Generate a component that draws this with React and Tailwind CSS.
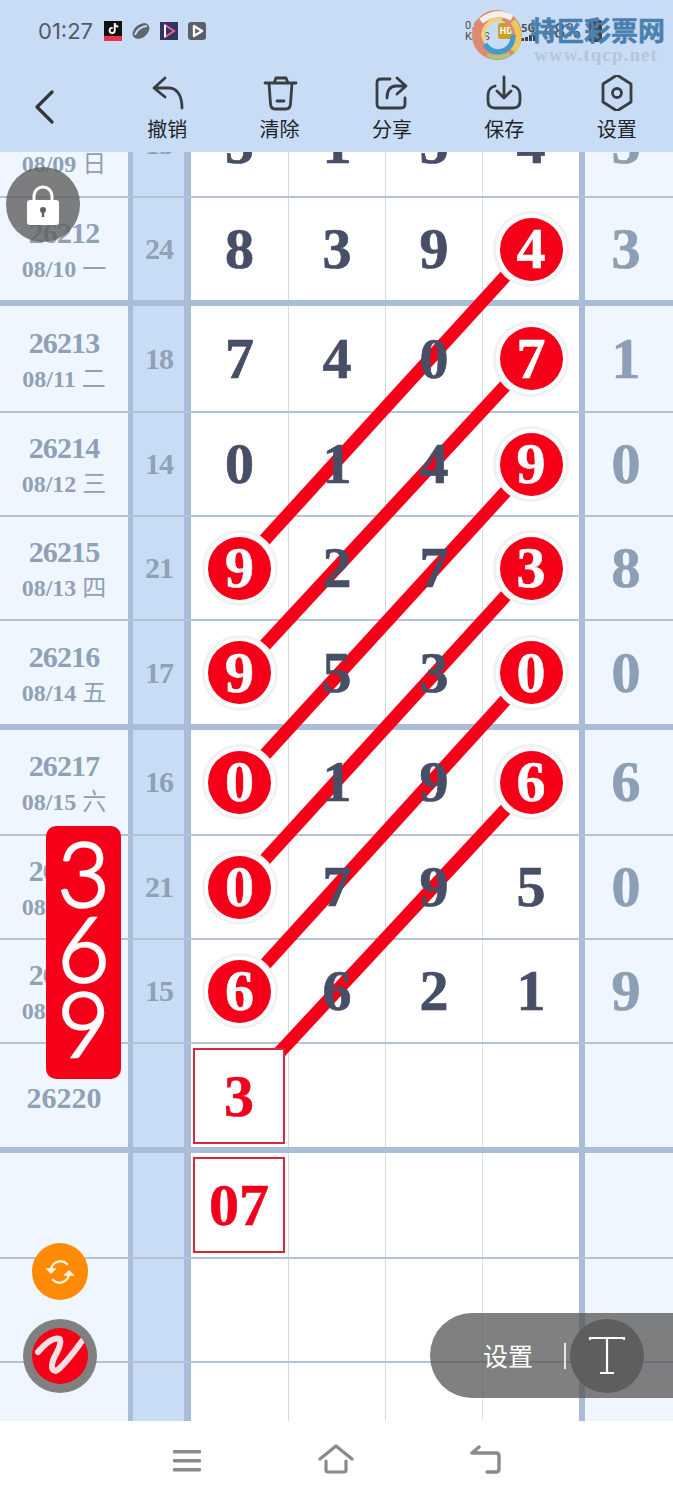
import React from 'react'
import { FaTiktok } from 'react-icons/fa6'

const rows = [
  { id: '26211', date: '08/09 日', sum: '15', digits: ['5', '1', '5', '4'], right: '5', h: 'h-[46px]', top: true },
  { id: '26212', date: '08/10 一', sum: '24', digits: ['8', '3', '9', '4'], hits: [3], right: '3', h: 'h-[108px]', thick: true },
  { id: '26213', date: '08/11 二', sum: '18', digits: ['7', '4', '0', '7'], hits: [3], right: '1', h: 'h-[107px]' },
  { id: '26214', date: '08/12 三', sum: '14', digits: ['0', '1', '4', '9'], hits: [3], right: '0', h: 'h-[104px]' },
  { id: '26215', date: '08/13 四', sum: '21', digits: ['9', '2', '7', '3'], hits: [0, 3], right: '8', h: 'h-[104px]' },
  { id: '26216', date: '08/14 五', sum: '17', digits: ['9', '5', '3', '0'], hits: [0, 3], right: '0', h: 'h-[109px]', thick: true },
  { id: '26217', date: '08/15 六', sum: '16', digits: ['0', '1', '9', '6'], hits: [0, 3], right: '6', h: 'h-[106px]' },
  { id: '26218', date: '08/16 日', sum: '21', digits: ['0', '7', '9', '5'], hits: [0], right: '0', h: 'h-[104px]' },
  { id: '26219', date: '08/17 一', sum: '15', digits: ['6', '6', '2', '1'], hits: [0], right: '9', h: 'h-[104px]' },
  { id: '26220', sum: '', digits: ['', '', '', ''], box: '3', right: '', h: 'h-[109px]', thick: true },
  { id: '', sum: '', digits: ['', '', '', ''], box: '07', right: '', h: 'h-[106px]' },
  { id: '', sum: '', digits: ['', '', '', ''], right: '', h: 'h-[104px]' },
  { id: '', sum: '', digits: ['', '', '', ''], right: '', h: 'h-[58px]', last: true },
]

const cellWidths = ['w-[98px]', 'w-[97px]', 'w-[97px]', 'w-[96px]']
const cellBorders = ['border-r border-[#d3dae3]', 'border-r border-[#d3dae3]', 'border-r border-[#dbe3ea]', '']

// ball pairs, in page coordinates
const lines = [
  [531, 248, 240, 567],
  [531, 358, 240, 672],
  [531, 464, 240, 782],
  [531, 568, 240, 887],
  [531, 672, 240, 992],
  [531, 782, 239, 1096],
]

const Ball = ({ value }) => (
  <div className="relative z-20 w-[76px] h-[76px] shrink-0 rounded-full bg-white border-[3px] border-[#f1f1f1] flex items-center justify-center">
    <div className="w-[63px] h-[63px] rounded-full bg-[#f60019] flex items-center justify-center text-white text-[58px] leading-none font-bold [-webkit-text-stroke:0.6px_#fff]">
      {value}
    </div>
  </div>
)

const Row = ({ row }) => {
  // the first row is scrolled under the header, so its content hangs from the bottom
  const align = row.top ? 'items-end overflow-hidden' : 'items-center'
  const inner = row.top ? 'h-[105px] shrink-0' : 'h-full'
  const border = row.last ? '' : row.thick ? 'border-b-[6px] border-[#a9bdd8]' : 'border-b-2 border-[#b3c2d6]'

  return (
    <div className={`flex w-full ${row.h} ${border}`}>
      <div className={`w-[128px] h-full bg-[#eff6ff] flex justify-center ${align}`}>
        <div className={`${inner} flex flex-col justify-center items-center pt-[5px] text-[#8fa1b6] font-bold`}>
          {row.id && <div className={`text-[30px] leading-[36px] ${row.date ? 'tracking-[-0.9px]' : ''}`}>{row.id}</div>}
          {row.date && (
            <div className="text-[24px] leading-[37px] whitespace-nowrap">
              {row.date.split(' ')[0]} <span className="font-normal">{row.date.split(' ')[1]}</span>
            </div>
          )}
        </div>
      </div>
      <div className={`w-[63px] h-full bg-[#c8dcf5] border-l-[5px] border-r-[7px] border-[#a9bdd8] flex justify-center pl-[1px] ${align}`}>
        <div className={`${inner} flex items-center text-[#8fa1b6] text-[30px] leading-none font-bold tracking-[-1px]`}>{row.sum}</div>
      </div>
      {row.digits.map((d, i) => (
        <div key={i} className={`${cellWidths[i]} ${cellBorders[i]} h-full bg-white flex justify-center ${align}`}>
          {i === 0 && row.box ? (
            <div className="relative z-20 ml-[-1px] w-[92px] h-[96px] shrink-0 bg-white border-2 border-[#d8283c] flex items-center justify-center text-[#f0001c] text-[60px] leading-none font-bold [-webkit-text-stroke:0.6px_#f0001c]">
              {row.box}
            </div>
          ) : row.hits && row.hits.includes(i) ? (
            <Ball value={d} />
          ) : (
            <div className={`${inner} relative z-20 flex items-center text-[#474f66] text-[58px] leading-none font-bold [-webkit-text-stroke:0.7px_#474f66]`}>{d}</div>
          )}
        </div>
      ))}
      <div className={`w-[94px] h-full bg-[#eff6ff] border-l-[6px] border-[#a9bdd8] flex justify-center pr-[6px] ${align}`}>
        <div className={`${inner} flex items-center text-[#8d9fb4] text-[58px] leading-none font-bold [-webkit-text-stroke:0.7px_#8d9fb4]`}>{row.right}</div>
      </div>
    </div>
  )
}

const ToolIcon = ({ children }) => (
  <svg width="40" height="36" viewBox="0 0 40 36" fill="none" stroke="#3a3d42" strokeWidth="2.8" strokeLinecap="round" strokeLinejoin="round">
    {children}
  </svg>
)

const tools = [
  { label: '撤销', icon: <path d="M18 3 L7 13 L18 22 M7 13 H22 C31 13 35 22 35 33" /> },
  { label: '清除', icon: <><path d="M5 8 H36 M14 8 L16 3 H26 L28 8 M9 8 L10.5 29 Q11 34 15 34 H26 Q30 34 30.5 29 L32 8" /><path d="M17 26 H24" /></> },
  { label: '分享', icon: <><path d="M18 4 H9 Q5 4 5 8 V29 Q5 33 9 33 H29 Q33 33 33 29 V23" /><path d="M25 3 L34 11 L25 19 M33 11 H24 Q15 11 15 23" /></> },
  { label: '保存', icon: <><path d="M11 11 Q4 13 4 20 V26 Q4 33 11 33 H29 Q36 33 36 26 V20 Q36 13 29 11" /><path d="M20 2 V22 M13 16 L20 23 L27 16" /></> },
  { label: '设置', icon: <><path d="M20 0 L34 9 V27 L20 36 L6 27 V9 Z" /><circle cx="20" cy="18" r="4.5" /></> },
]

const StatusApps = () => (
  <div className="flex items-center gap-[10px]">
    <div className="relative w-[18px] h-[20px] bg-[#111] flex items-start justify-center pt-[2px] text-white">
      <FaTiktok size={11} />
      <div className="absolute left-0 right-0 bottom-0 h-[5px] bg-[#ee2d4f]" />
    </div>
    <svg width="18" height="18" viewBox="0 0 18 18">
      <ellipse cx="9" cy="9" rx="9.5" ry="6.5" transform="rotate(-40 9 9)" fill="#5f6670" />
      <path d="M3 13 Q6 5 15 4" stroke="#c8dcf5" strokeWidth="2" fill="none" />
    </svg>
    <svg width="18" height="18" viewBox="0 0 18 18">
      <rect width="18" height="18" fill="#2f3560" />
      <path d="M5 3 L14 9 L5 15 Z" fill="none" stroke="#f25f9a" strokeWidth="2" />
      <path d="M5 3 V15" stroke="#fff" strokeWidth="2" />
    </svg>
    <svg width="18" height="18" viewBox="0 0 18 18">
      <rect width="18" height="18" rx="3" fill="#5b6068" />
      <path d="M6 4 L14 9 L6 14 Z" fill="none" stroke="#fff" strokeWidth="2.4" strokeLinejoin="round" />
    </svg>
  </div>
)

const StatusRight = () => (
  <div className="absolute left-[465px] top-[18px] flex items-center text-[#4a4f57]">
    <div className="w-[28px] text-[11px] leading-[11px] font-['Roboto',sans-serif]">
      <div>0.00</div>
      <div>KB/S</div>
    </div>
    <div className="ml-[5px] w-[16px] h-[16px] rounded-[3px] bg-[#c9a227] text-[9px] leading-[16px] text-center font-bold text-white">HD</div>
    <div className="ml-[7px] flex flex-col items-start">
      <div className="text-[11px] leading-[11px] font-bold">5G</div>
      <div className="flex items-end gap-[1px] h-[8px]">
        <div className="w-[3px] h-[3px] bg-[#3d4249]" />
        <div className="w-[3px] h-[4px] bg-[#3d4249]" />
        <div className="w-[3px] h-[6px] bg-[#3d4249]" />
        <div className="w-[3px] h-[8px] bg-[#3d4249]" />
      </div>
    </div>
    <div className="ml-[6px] text-[21px] leading-[26px] font-['Roboto',sans-serif]">48%</div>
    <div className="ml-[8px] w-[13px] h-[22px] rounded-[2px] bg-[#3d4249]" />
  </div>
)

const Watermark = () => (
  <>
    <svg className="absolute left-[472px] top-[9px]" width="52" height="52" viewBox="0 0 52 52" fill="none">
      <circle cx="25" cy="26" r="20" stroke="#dd8a72" strokeWidth="10" />
      <path d="M9 12 Q25 0 40 9" stroke="#f0f1ea" strokeWidth="6" />
      <path d="M41 12 Q52 28 41 42" stroke="#e9c860" strokeWidth="6" />
      <path d="M38 45 Q28 51 15 46" stroke="#a8c67c" strokeWidth="4" />
      <path d="M41 26 A15 15 0 0 1 13 35" stroke="#3e9ccf" strokeWidth="5" />
      <path d="M13 32 A15 15 0 0 1 30 11" stroke="#f1d27a" strokeWidth="4" />
    </svg>
    <div className="absolute left-[530px] top-[14px] w-[136px] text-[27px] leading-[32px] font-bold text-[#4a80b0] whitespace-nowrap [-webkit-text-stroke:0.5px_#4a80b0]">
      特区彩票网
    </div>
    <div className="absolute left-[534px] top-[46px] text-[19px] leading-[18px] font-bold tracking-[1.1px] text-[#b5c5d8] font-['Liberation_Serif',serif]">
      www.tqcp.net
    </div>
  </>
)

export default function App() {
  return (
    <div className="relative w-[673px] h-[1500px] flex flex-col overflow-hidden bg-white font-['Liberation_Serif','Noto_Sans_CJK_SC',serif]">
      {/* header */}
      <div className="relative z-40 h-[152px] shrink-0 bg-[#c8dcf5] font-['Noto_Sans_CJK_SC',sans-serif]">
        <div className="flex items-center h-[62px] pl-[38px] gap-[11px]">
          <span className="text-[22px] leading-none text-[#555b64] font-['Inter',sans-serif]">01:27</span>
          <StatusApps />
        </div>
        <StatusRight />
        <Watermark />
        <div className="flex h-[90px]">
          <div className="w-[111px] pl-[32px] pt-[28px]">
            <svg width="26" height="34" viewBox="0 0 26 34" fill="none" stroke="#33363b" strokeWidth="3.2" strokeLinecap="round" strokeLinejoin="round">
              <path d="M20 2 L5 17 L20 32" />
            </svg>
          </div>
          {tools.map((t) => (
            <div key={t.label} className="w-[112.4px] flex flex-col items-center pt-[13px]">
              <ToolIcon>{t.icon}</ToolIcon>
              <span className="mt-[5px] text-[20px] leading-[26px] text-[#222428]">{t.label}</span>
            </div>
          ))}
        </div>
      </div>

      {/* number table */}
      <div className="relative h-[1269px] shrink-0 overflow-hidden">
        {rows.map((row, i) => (
          <Row key={i} row={row} />
        ))}
        <svg className="absolute left-0 top-0 z-10" width="673" height="1269" viewBox="0 152 673 1269">
          {lines.map((l, i) => (
            <line key={i} x1={l[0]} y1={l[1]} x2={l[2]} y2={l[3]} stroke="#f60019" strokeWidth="13" />
          ))}
        </svg>
      </div>

      {/* nav bar */}
      <div className="relative h-[79px] shrink-0 bg-white">
        <svg className="absolute left-[172px] top-[28px]" width="30" height="24" viewBox="0 0 30 24" fill="#8a8a8a">
          <rect x="1" y="1" width="28" height="3.6" rx="1" />
          <rect x="1" y="10" width="28" height="3.6" rx="1" />
          <rect x="1" y="19" width="28" height="3.6" rx="1" />
        </svg>
        <svg className="absolute left-[317px] top-[23px]" width="38" height="30" viewBox="0 0 38 30" fill="none" stroke="#8a8a8a" strokeWidth="3.2" strokeLinecap="round" strokeLinejoin="round">
          <path d="M3 15 L19 2 L35 15" />
          <path d="M9 17 V26 Q9 28 11 28 H27 Q29 28 29 26 V17" />
        </svg>
        <svg className="absolute left-[469px] top-[24px]" width="34" height="30" viewBox="0 0 34 30" fill="none" stroke="#8a8a8a" strokeWidth="3.4" strokeLinecap="round" strokeLinejoin="round">
          <path d="M3 8 L10 2 M3 8 H27 Q30 8 30 11 V24 Q30 27 27 27 H18" />
        </svg>
      </div>

      {/* floating controls */}
      <div className="absolute z-30 left-[6px] top-[167px] w-[74px] h-[75px] rounded-full bg-[#5f5f5f]/80 flex items-center justify-center">
        <svg width="34" height="42" viewBox="0 0 34 42">
          <path d="M8 20 V12 A9 9 0 0 1 26 12 V20" fill="none" stroke="#fff" strokeWidth="3" />
          <rect x="1" y="16" width="32" height="25" rx="3" fill="#fff" />
          <circle cx="17" cy="26" r="3" fill="#5f5f5f" />
          <rect x="15.8" y="27" width="2.4" height="6" fill="#5f5f5f" />
        </svg>
      </div>

      <div className="absolute z-30 left-[46px] top-[826px] w-[75px] h-[253px] rounded-[10px] bg-[#f60019] flex flex-col items-center pt-[9px] text-white text-[90px] leading-[75px] font-['Lato',sans-serif] font-light [-webkit-text-stroke:2.5px_#fff]">
        <span>3</span>
        <span>6</span>
        <span>9</span>
      </div>

      <div className="absolute z-30 left-[32px] top-[1243px] w-[56px] h-[57px] rounded-full bg-[#ff8a05] flex items-center justify-center">
        <svg width="30" height="28" viewBox="0 0 30 28" fill="none" stroke="#fff3dc" strokeWidth="2.4" strokeLinecap="round">
          <path d="M6 12 A9.5 9.5 0 0 1 22 6" />
          <path d="M24 16 A9.5 9.5 0 0 1 8 22" />
          <path d="M1.5 11 L6 15.5 L10.5 11 Z" fill="#fff3dc" strokeWidth="1" />
          <path d="M19.5 17 L24 12.5 L28.5 17 Z" fill="#fff3dc" strokeWidth="1" />
        </svg>
      </div>

      <div className="absolute z-30 left-[23px] top-[1319px] w-[74px] h-[74px] rounded-full bg-[#808080] flex items-center justify-center">
        <div className="w-[56px] h-[56px] rounded-full bg-[#f60019] overflow-hidden">
          <svg width="56" height="56" viewBox="0 0 56 56" fill="none" stroke="#f6dfe2" strokeWidth="6" strokeLinecap="round" strokeLinejoin="round">
            <path d="M6 24 Q20 8 28 11 Q30 16 22 30 Q17 42 24 43 Q32 38 50 13" />
          </svg>
        </div>
      </div>

      <div className="absolute z-30 left-[430px] top-[1313px] w-[243px] h-[85px] rounded-l-[42px] bg-[#555555]/75 flex items-center font-['Noto_Sans_CJK_SC',sans-serif]">
        <span className="ml-[53px] text-[25px] leading-none text-white">设置</span>
        <div className="ml-[31px] w-[2px] h-[26px] bg-white/80" />
        <div className="ml-[4px] w-[74px] h-[74px] rounded-full bg-[#5e5e5e] flex items-center justify-center">
          <svg width="40" height="40" viewBox="0 0 40 40" fill="none" stroke="#fff" strokeWidth="2.2">
            <path d="M3 2 H37 M3 1 V4 M37 1 V4 M20 2 V37 M13 37 H27" />
          </svg>
        </div>
      </div>
    </div>
  )
}
